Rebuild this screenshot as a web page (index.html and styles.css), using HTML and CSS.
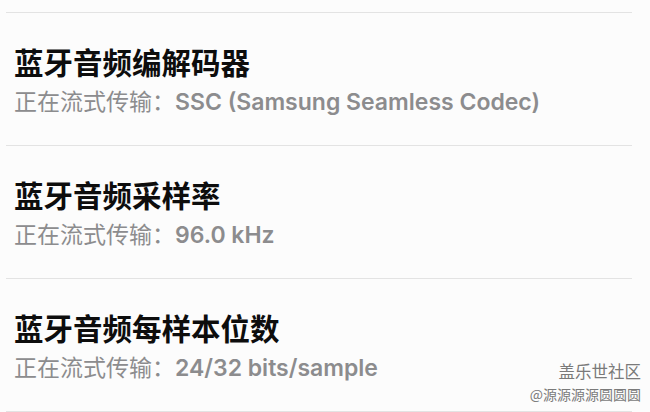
FILE: index.html
```html
<!DOCTYPE html>
<html lang="zh-CN">
<head>
  <meta charset="UTF-8" />
  <meta name="viewport" content="width=device-width, initial-scale=1.0" />
  <title>蓝牙音频</title>
  <link rel="stylesheet" href="styles.css">
</head>
<body>
  <div class="settings">
    <div class="row">
      <div class="title">蓝牙音频编解码器</div>
      <div class="summary">正在流式传输：<span class="value">SSC (Samsung Seamless Codec)</span></div>
    </div>
    <div class="row">
      <div class="title">蓝牙音频采样率</div>
      <div class="summary">正在流式传输：<span class="value">96.0 kHz</span></div>
    </div>
    <div class="row">
      <div class="title">蓝牙音频每样本位数</div>
      <div class="summary">正在流式传输：<span class="value">24/32 bits/sample</span></div>
    </div>
  </div>

  <div class="watermark">
    <div class="wm-name">盖乐世社区</div>
    <div class="wm-user">@源源源源圆圆圆</div>
  </div>
</body>
</html>
```

FILE: styles.css
```css
body {
  margin: 0;
  background: #fcfcfc;
  font-family: Inter, "Noto Sans CJK SC", sans-serif;
  color: #111;
}
.settings {
  padding: 12px 18px 0 6px;
}
.row {
  border-top: 1px solid #e3e3e3;
  padding: 32px 0 28px 8px;
}
.row:last-child {
  border-bottom: 1px solid #e3e3e3;
}
.title {
  font-size: 29.5px;
  line-height: 36px;
  font-weight: 700;
  color: #0d0d0d;
}
.summary {
  margin-top: 6px;
  font-size: 23px;
  line-height: 30px;
  font-weight: 400;
  color: #8c8c8e;
}
.value {
  font-size: 23px;
  font-weight: 600;
}
.watermark {
  position: absolute;
  right: 9px;
  top: 359px;
  text-align: right;
  color: #7a7a7a;
  font-family: "Noto Sans CJK SC", sans-serif;
  text-shadow: 0 0 2px #fff;
}
.wm-name {
  font-size: 16.5px;
  line-height: 24px;
}
.wm-user {
  font-size: 14px;
  line-height: 22px;
}
```
